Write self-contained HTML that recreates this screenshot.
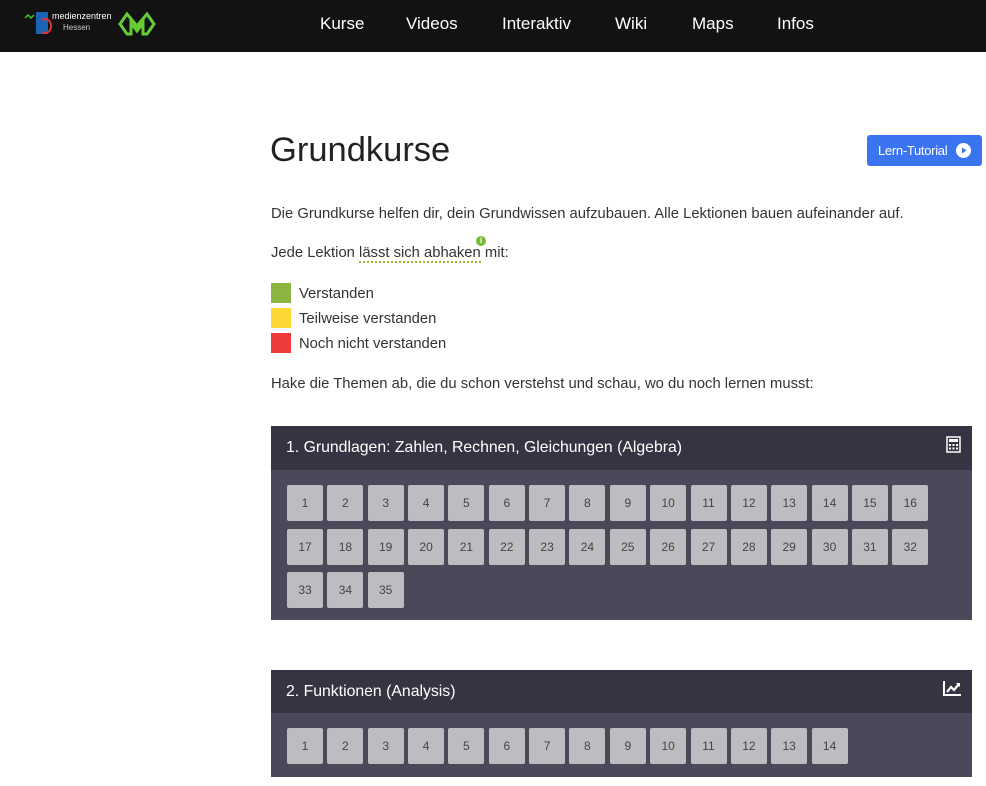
<!DOCTYPE html>
<html><head><meta charset="utf-8"><style>
*{margin:0;padding:0;box-sizing:border-box}
body{width:986px;height:786px;background:#fff;font-family:"Liberation Sans",sans-serif;color:#333;position:relative;overflow:hidden}
.hdr{position:absolute;left:0;top:0;width:986px;height:52px;background:#121212}
.nav{position:absolute;top:14px;color:#fff;font-size:17px}
.a{position:absolute}
.t{font-size:14.8px;color:#333}
.sw{position:absolute;left:271px;width:20px;height:20px}
.ph{position:absolute;left:271px;width:701px;height:44px;background:#353442;color:#fff;font-size:15.8px;padding:13px 0 0 15px}
.pb{position:absolute;left:271px;width:701px;background:#4a4859}
.b{position:absolute;width:36px;height:36px;background:#bdbcc0;border-radius:2px;color:#444;font-size:12px;text-align:center;line-height:36px}
</style></head><body>
<div class="hdr">
<svg class="a" style="left:24px;top:10px" width="30" height="26"><path d="M1 8 l3 -3 l3 3 l3 -3" stroke="#3c3" stroke-width="1.5" fill="none"/><rect x="12" y="2" width="12" height="22" fill="#1a64b8"/><path d="M18 10 a6 7 0 1 1 0 12" stroke="#d33" stroke-width="2" fill="none"/></svg>
<div class="a" style="left:52px;top:11px;color:#fff;font-size:9px">medienzentren</div>
<div class="a" style="left:63px;top:23px;color:#ccc;font-size:8px">Hessen</div>
<svg class="a" style="left:118px;top:11px" width="38" height="26"><path d="M2 13 L9 3 L19 15 L29 3 L36 13 L29 23 L25 23 L25 12 L19 20 L13 12 L13 23 L9 23 Z" fill="none" stroke="#6c3" stroke-width="3"/></svg>
<div class="nav" style="left:320px">Kurse</div>
<div class="nav" style="left:406px">Videos</div>
<div class="nav" style="left:502px">Interaktiv</div>
<div class="nav" style="left:615px">Wiki</div>
<div class="nav" style="left:692px">Maps</div>
<div class="nav" style="left:777px">Infos</div>
</div>
<div class="a" style="left:270px;top:131px;font-size:34.5px;color:#222">Grundkurse</div>
<div class="a" style="left:867px;top:135px;width:115px;height:31px;background:#3b74f0;border-radius:3px;color:#fff;font-size:13px;padding:8px 0 0 11px;letter-spacing:-0.3px">Lern-Tutorial
<svg class="a" style="left:89px;top:8px" width="15" height="15"><circle cx="7.5" cy="7.5" r="7.5" fill="#fff"/><path d="M6 4.5 L10.5 7.5 L6 10.5Z" fill="#3b74f0"/></svg></div>
<div class="a t" style="left:271px;top:206px">Die Grundkurse helfen dir, dein Grundwissen aufzubauen. Alle Lektionen bauen aufeinander auf.</div>
<div class="a t" style="left:271px;top:245px">Jede Lektion <span style="border-bottom:2px dotted #9b3">lässt sich abhaken</span> mit:</div>
<div class="a" style="left:476px;top:236px;width:10px;height:10px;border-radius:5px;background:#7b3;color:#fff;font-size:8px;text-align:center;line-height:10px;font-weight:bold">i</div>
<div class="sw" style="top:283px;background:#8cb53f"></div><div class="a t" style="left:299px;top:286px">Verstanden</div>
<div class="sw" style="top:308px;background:#fdd835"></div><div class="a t" style="left:299px;top:311px">Teilweise verstanden</div>
<div class="sw" style="top:333px;background:#ef3b3b"></div><div class="a t" style="left:299px;top:336px">Noch nicht verstanden</div>
<div class="a t" style="left:271px;top:376px">Hake die Themen ab, die du schon verstehst und schau, wo du noch lernen musst:</div>
<div class="ph" style="top:426px">1. Grundlagen: Zahlen, Rechnen, Gleichungen (Algebra)
<svg class="a" style="left:675px;top:10px" width="15" height="17"><rect x="1" y="1" width="13" height="15" fill="none" stroke="#fff" stroke-width="1.5"/><rect x="3" y="3" width="9" height="3" fill="#fff"/><g fill="#fff"><rect x="3" y="8" width="2" height="2"/><rect x="6.5" y="8" width="2" height="2"/><rect x="10" y="8" width="2" height="2"/><rect x="3" y="11.5" width="2" height="2"/><rect x="6.5" y="11.5" width="2" height="2"/><rect x="10" y="11.5" width="2" height="2"/></g></svg></div>
<div class="pb" style="top:470px;height:150px" id="p1"></div>
<div class="ph" style="top:670px">2. Funktionen (Analysis)
<svg class="a" style="left:672px;top:10px" width="19" height="17"><path d="M1 1 V15 H18" stroke="#fff" stroke-width="2" fill="none"/><path d="M4 12 L8 7 L11 10 L16 4" stroke="#fff" stroke-width="2.2" fill="none"/><path d="M13 3 H17 V7Z" fill="#fff"/></svg></div>
<div class="pb" style="top:713px;height:64px" id="p2"></div>
<script>
function fill(id,n,y0){var p=document.getElementById(id),h='';for(var i=0;i<n;i++){var r=Math.floor(i/16),c=i%16;h+='<div class="b" style="left:'+(16+c*40.35).toFixed(1)+'px;top:'+(y0+r*43.5)+'px">'+(i+1)+'</div>';}p.innerHTML=h;}
fill('p1',35,15);fill('p2',14,15);
</script>
</body></html>
